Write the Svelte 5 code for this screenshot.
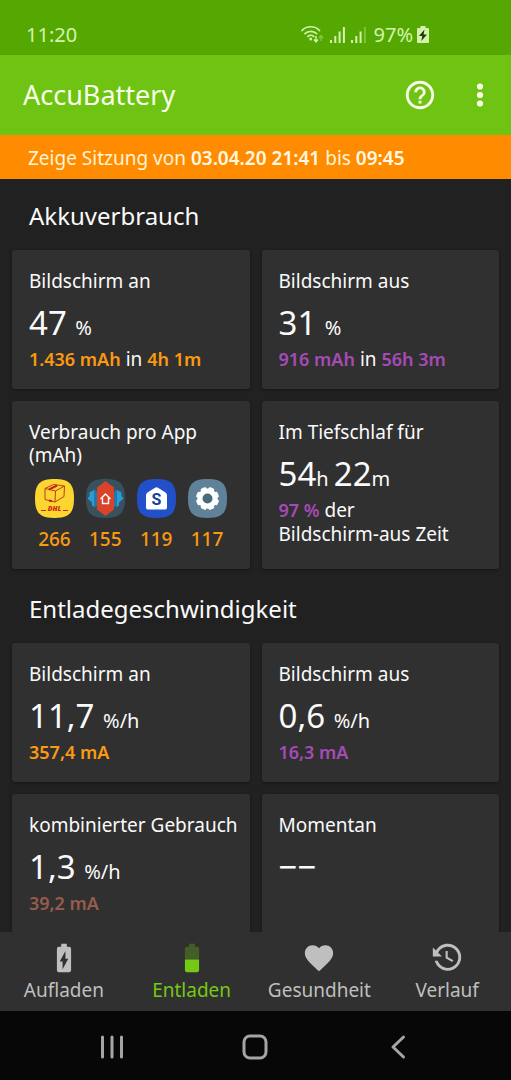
<script>
  /**
   * App.svelte
   *
   * Discharge screen: battery usage and discharge speed of the last session.
   */

  // ===== SESSION =====
  const session = { from: '03.04.20 21:41', to: '09:45' };

  // ===== CARDS =====
  // value: big numbers with their small unit, note: coloured and plain parts
  const usage = [
    {
      label: 'Bildschirm an',
      value: [{ number: '47 ', unit: '%' }],
      note: [
        { text: '1.436 mAh', tone: 'orange' },
        { text: ' in ' },
        { text: '4h 1m', tone: 'orange' }
      ]
    },
    {
      label: 'Bildschirm aus',
      value: [{ number: '31 ', unit: '%' }],
      note: [
        { text: '916 mAh', tone: 'purple' },
        { text: ' in ' },
        { text: '56h 3m', tone: 'purple' }
      ]
    },
    {
      label: 'Verbrauch pro App (mAh)',
      apps: [
        { icon: 'parcel', amount: 266 },
        { icon: 'launcher', amount: 155 },
        { icon: 'home', amount: 119 },
        { icon: 'settings', amount: 117 }
      ]
    },
    {
      label: 'Im Tiefschlaf für',
      value: [
        { number: '54', unit: 'h ' },
        { number: '22', unit: 'm' }
      ],
      note: [{ text: '97 %', tone: 'purple' }, { text: ' der\nBildschirm-aus Zeit' }]
    }
  ];

  const speed = [
    {
      label: 'Bildschirm an',
      value: [{ number: '11,7 ', unit: '%/h' }],
      note: [{ text: '357,4 mA', tone: 'orange' }]
    },
    {
      label: 'Bildschirm aus',
      value: [{ number: '0,6 ', unit: '%/h' }],
      note: [{ text: '16,3 mA', tone: 'purple' }]
    },
    {
      label: 'kombinierter Gebrauch',
      value: [{ number: '1,3 ', unit: '%/h' }],
      note: [{ text: '39,2 mA', tone: 'brown' }]
    },
    {
      label: 'Momentan',
      value: [{ number: '−−', unit: '' }],
      note: []
    }
  ];

  const sections = [
    { title: 'Akkuverbrauch', cards: usage },
    { title: 'Entladegeschwindigkeit', cards: speed }
  ];

  // ===== NAVIGATION =====
  const tabs = [
    { id: 'charge', label: 'Aufladen' },
    { id: 'discharge', label: 'Entladen' },
    { id: 'health', label: 'Gesundheit' },
    { id: 'history', label: 'Verlauf' }
  ];

  let activeTab = $state('discharge');
</script>

{#snippet appIcon(name)}
  <svg class="app-icon" viewBox="0 0 39 39" aria-hidden="true">
    {#if name === 'parcel'}
      <path d="M19.500 0C34 0 39 5 39 19.500S34 39 19.500 39 0 34 0 19.500 5 0 19.500 0z" fill="#fdd531" />
      <g fill="none" stroke="#b3421a" stroke-width="1" stroke-linejoin="round">
        <path d="M10 9.500 20.500 12 20 23 10 20.500zM20.500 12 29.500 7 29 17.500 20 23M10 9.500 18.500 5.500 29.500 7" />
        <path d="M14 10.500 22 6.500" stroke="#c8201c" stroke-width="2" />
        <path d="M14 21.500l3 .8" stroke="#c8201c" stroke-width="2" />
      </g>
      <path d="M6 31.500h5M28 31.500h5" stroke="#cf2a18" stroke-width="1" />
      <text x="19.500" y="32" text-anchor="middle" class="parcel-text">DHL</text>
    {:else if name === 'launcher'}
      <path d="M19.500 0C34 0 39 5 39 19.500S34 39 19.500 39 0 34 0 19.500 5 0 19.500 0z" fill="#37515d" />
      <path d="M9 10.500v18L6 26.500v-3L1.500 19.500 3.500 17v-3.500L9 10.500z" fill="#2b9bd7" />
      <path d="M30 10.500v18l3-2v-3l4.500-4-2-2.500v-3.500L30 10.500z" fill="#2b9bd7" />
      <path d="M8 11 12 13v14l-4 1zM31 11 27 13v14l4 1z" fill="#2277ab" />
      <path d="M19.500 2 28 8.500v22L19.500 37 11 30.500v-22z" fill="#d9432a" />
      <path d="M14.500 20l5-5 5 5M16.500 19v5.500h6V19" fill="none" stroke="#fff" stroke-width="1.400" />
    {:else if name === 'home'}
      <path d="M19.500 0C34 0 39 5 39 19.500S34 39 19.500 39 0 34 0 19.500 5 0 19.500 0z" fill="#2150c9" />
      <path d="M18 8.700q1.500-1 3 0l7.500 4.800q1.500 1 1.500 2.500v12.500q0 2-2 2H11q-2 0-2-2V16q0-1.500 1.500-2.500z" fill="#fff" />
      <text x="19.500" y="26" text-anchor="middle" class="home-text">S</text>
    {:else}
      <path d="M19.500 0C34 0 39 5 39 19.500S34 39 19.500 39 0 34 0 19.500 5 0 19.500 0z" fill="#5f8298" />
      <g fill="#fff">
        {#each [0, 45, 90, 135] as angle}
          <rect x="16.500" y="8" width="6" height="23" rx="1.500" transform="rotate({angle + 22.5} 19.500 19.500)" />
        {/each}
        <circle cx="19.500" cy="19.500" r="10" />
      </g>
      <circle cx="19.500" cy="19.500" r="5" fill="#4a6b7c" />
    {/if}
  </svg>
{/snippet}

{#snippet tabIcon(name)}
  <svg class="icon" viewBox="0 0 24 24" fill="currentColor" aria-hidden="true">
    {#if name === 'charge'}
      <path d="M15.670 4H14V2h-4v2H8.330C7.600 4 7 4.600 7 5.330v15.330C7 21.400 7.600 22 8.330 22h7.330c.74 0 1.340-.6 1.340-1.330V5.330C17 4.600 16.400 4 15.670 4zM11 20v-5.500H9L13 7v5.500h2L11 20z" />
    {:else if name === 'discharge'}
      <path fill-opacity=".3" d="M17 5.330C17 4.600 16.400 4 15.670 4H14V2h-4v2H8.330C7.600 4 7 4.600 7 5.330V13h10V5.330z" />
      <path d="M7 13v7.670C7 21.400 7.600 22 8.330 22h7.330c.74 0 1.340-.6 1.340-1.330V13H7z" />
    {:else if name === 'health'}
      <path d="M12 21.350l-1.450-1.320C5.400 15.360 2 12.280 2 8.500 2 5.420 4.420 3 7.500 3c1.740 0 3.410.81 4.500 2.090C13.090 3.810 14.760 3 16.500 3 19.580 3 22 5.420 22 8.500c0 3.780-3.400 6.860-8.550 11.540L12 21.350z" />
    {:else}
      <path d="M11 7v5.110l4.710 2.790.79-1.280-4-2.370V7M12.500 2C8.970 2 5.910 3.920 4.270 6.770L2 4.500V11h6.500L5.750 8.250C6.960 5.730 9.500 4 12.500 4a7.500 7.500 0 0 1 0 15c-3.270 0-6.030-2.090-7.060-5h-2.100c1.100 4.030 4.770 7 9.160 7 5.240 0 9.500-4.250 9.500-9.500A9.500 9.500 0 0 0 12.500 2z" />
    {/if}
  </svg>
{/snippet}

<div class="screen">
  <!-- Status bar -->
  <div class="status-bar">
    <span>11:20</span>
    <div class="status-icons">
      <svg width="23" height="19" viewBox="0 0 23 19" aria-hidden="true">
        <g fill="none" stroke="currentColor" stroke-width="1.700" stroke-linecap="round">
          <path d="M1 5.500C5.500.5 14 .5 18.500 5.500M4 8.700c3-3.200 8.500-3.200 11.500 0M6.800 11.500c1.700-1.600 4.300-1.600 6 0" />
        </g>
        <circle cx="9.700" cy="14" r="1.500" fill="currentColor" />
        <path d="M15 11v5M13 14.500l2 2.500 2-2.500" fill="none" stroke="currentColor" stroke-width="1.400" />
        <path d="M20 16v-5M18 13l2-2.500 2 2.500" fill="none" stroke="currentColor" stroke-width="1.400" opacity=".4" />
      </svg>
      <svg width="15" height="18" viewBox="0 0 15 18" fill="currentColor" aria-hidden="true">
        <path d="M0 14h2v3H0zM4.300 10h2v7h-2zM8.600 5.500h2V17h-2zM12.900 1h2v16h-2z" />
      </svg>
      <svg width="15" height="18" viewBox="0 0 15 18" fill="currentColor" aria-hidden="true">
        <path d="M0 14h2v3H0zM4.300 10h2v7h-2zM8.600 5.500h2V17h-2z" />
        <path d="M12.900 1h2v16h-2z" opacity=".35" />
      </svg>
      <span class="percent">97%</span>
      <svg width="12" height="18" viewBox="0 0 12 18" aria-hidden="true">
        <path d="M3.500 0h5v2H11q1 0 1 1v13q0 1-1 1H1q-1 0-1-1V3q0-1 1-1h2.500z" fill="currentColor" />
        <path d="M7.500 3.500 2 10h3.300l-1 5L10 8.500H6.600z" fill="#1c3a05" />
      </svg>
    </div>
  </div>

  <!-- App bar -->
  <header class="app-bar">
    <h1>AccuBattery</h1>
    <button type="button" aria-label="Hilfe">
      <svg class="icon" viewBox="0 0 24 24" fill="currentColor" aria-hidden="true">
        <path d="M11 18h2v-2h-2v2zm1-16C6.480 2 2 6.480 2 12s4.480 10 10 10 10-4.480 10-10S17.520 2 12 2zm0 18c-4.410 0-8-3.590-8-8s3.590-8 8-8 8 3.590 8 8-3.590 8-8 8zm0-14c-2.210 0-4 1.790-4 4h2c0-1.100.9-2 2-2s2 .9 2 2c0 2-3 1.750-3 5h2c0-2.250 3-2.500 3-5 0-2.210-1.790-4-4-4z" />
      </svg>
    </button>
    <button type="button" aria-label="Mehr">
      <svg class="icon" viewBox="0 0 24 24" fill="currentColor" aria-hidden="true">
        <circle cx="12" cy="6" r="2.200" />
        <circle cx="12" cy="12" r="2.200" />
        <circle cx="12" cy="18" r="2.200" />
      </svg>
    </button>
  </header>

  <p class="banner">Zeige Sitzung von <b>{session.from}</b> bis <b>{session.to}</b></p>

  <!-- Cards -->
  <main>
    {#each sections as section}
      <section>
        <h2>{section.title}</h2>
        <div class="cards">
          {#each section.cards as card}
            <article class="card">
              <h3>{card.label}</h3>
              {#if card.apps}
                <ul class="apps">
                  {#each card.apps as app}
                    <li>
                      {@render appIcon(app.icon)}
                      <span>{app.amount}</span>
                    </li>
                  {/each}
                </ul>
              {:else}
                <p class="value">
                  {#each card.value as part}<span>{part.number}</span><small>{part.unit}</small>{/each}
                </p>
                <p class="note">
                  {#each card.note as part}<span class={part.tone}>{part.text}</span>{/each}
                </p>
              {/if}
            </article>
          {/each}
        </div>
      </section>
    {/each}
  </main>

  <!-- Bottom navigation -->
  <nav class="tabs">
    {#each tabs as tab}
      <button type="button" class:active={activeTab === tab.id} onclick={() => (activeTab = tab.id)}>
        {@render tabIcon(tab.id)}
        {tab.label}
      </button>
    {/each}
  </nav>

  <div class="system-nav">
    <button type="button" aria-label="Letzte Apps">
      <svg width="28" height="28" viewBox="0 0 28 28" aria-hidden="true">
        <path d="M4.500 4v20M14 4v20M23.500 4v20" />
      </svg>
    </button>
    <button type="button" aria-label="Startseite">
      <svg width="28" height="28" viewBox="0 0 28 28" aria-hidden="true">
        <rect x="3" y="3" width="22" height="22" rx="6" />
      </svg>
    </button>
    <button type="button" aria-label="Zurück">
      <svg width="28" height="28" viewBox="0 0 28 28" aria-hidden="true">
        <path d="M18.500 4 8 14l10.500 10" />
      </svg>
    </button>
  </div>
</div>

<style>
  :global(body) {
    background: #212121;
  }

  .screen {
    display: flex;
    flex-direction: column;
    height: 100vh;
    background: #212121;
    color: #fafafa;
    font-family: 'Noto Sans', 'Open Sans', sans-serif;
    font-size: 19px;
    line-height: 23px;
  }

  h1,
  h2,
  h3,
  p,
  ul {
    margin: 0;
    padding: 0;
    font-weight: 400;
  }

  button {
    padding: 0;
    border: 0;
    background: none;
    color: inherit;
    font: inherit;
    cursor: pointer;
  }

  svg {
    display: block;
  }

  .icon {
    width: 34px;
    height: 34px;
  }

  /* Top */
  .status-bar {
    display: flex;
    justify-content: space-between;
    align-items: center;
    padding: 23px 82px 9px 26px;
    background: #54a801;
    color: #d3f3ac;
    font-size: 20px;
  }

  .status-icons {
    display: flex;
    align-items: center;
    gap: 6px;
  }

  .percent {
    margin: 0 -2px 0 2px;
  }

  .app-bar {
    display: flex;
    align-items: center;
    gap: 26px;
    padding: 23px 14px 23px 23px;
    background: #6fc413;
    color: #f9ffe9;
  }

  .app-bar h1 {
    flex: 1;
    font-size: 27px;
    line-height: 34px;
  }

  .banner {
    padding: 12px 28px 9px;
    background: #ff8c00;
    color: #fff3d6;
  }

  .banner b {
    font-weight: 600;
    color: #fff8e4;
  }

  /* Cards */
  main {
    flex: 1;
    min-height: 0;
    overflow: hidden;
  }

  section {
    padding: 0 12px 3px;
  }

  h2 {
    padding: 21px 17px 18px;
    font-size: 24px;
    line-height: 32px;
  }

  .cards {
    display: grid;
    grid-template-columns: 1fr 1fr;
    gap: 12px;
  }

  .card {
    padding: 20px 8px 18px 17px;
    border-radius: 3px;
    background: #303030;
    box-shadow: 0 1px 3px rgba(0, 0, 0, 0.4);
  }

  .card h3 {
    font-size: 19px;
  }

  .value {
    margin: 10px 0 4px;
    font-size: 33px;
    line-height: 40px;
  }

  .value span,
  .value small {
    white-space: pre;
  }

  .value small {
    font-size: 20px;
    line-height: 20px;
  }

  .note {
    min-height: 24px;
    line-height: 24px;
  }

  .note span {
    white-space: pre-line;
  }

  .orange,
  .purple,
  .brown {
    font-size: 18px;
    font-weight: 600;
  }

  .orange {
    color: #fb9a10;
  }

  .purple {
    color: #a64bb6;
  }

  .brown {
    color: #955c4d;
  }

  .apps {
    display: grid;
    grid-template-columns: repeat(4, 1fr);
    margin: 12px 9px 0 0;
    list-style: none;
  }

  .apps li {
    display: flex;
    flex-direction: column;
    align-items: center;
    gap: 10px;
    color: #fb9a10;
    font-weight: 500;
  }

  .app-icon {
    width: 39px;
    height: 39px;
  }

  .parcel-text {
    fill: #cf2a18;
    font: italic 900 7px 'Noto Sans', sans-serif;
  }

  .home-text {
    fill: #123f9c;
    font: 700 16px Roboto, sans-serif;
  }

  /* Bottom */
  .tabs {
    display: grid;
    grid-template-columns: repeat(4, 1fr);
    background: #303030;
    color: #bfbfbf;
  }

  .tabs button {
    display: flex;
    flex-direction: column;
    align-items: center;
    gap: 4px;
    padding: 9px 0;
  }

  .tabs button.active {
    color: #74c916;
  }

  .system-nav {
    display: grid;
    grid-template-columns: repeat(3, 1fr);
    padding: 22px 8% 19px;
    background: #070707;
    color: #a5a5a5;
  }

  .system-nav button {
    display: flex;
    justify-content: center;
  }

  .system-nav svg {
    fill: none;
    stroke: currentColor;
    stroke-width: 3;
    stroke-linecap: round;
    stroke-linejoin: round;
  }
</style>
